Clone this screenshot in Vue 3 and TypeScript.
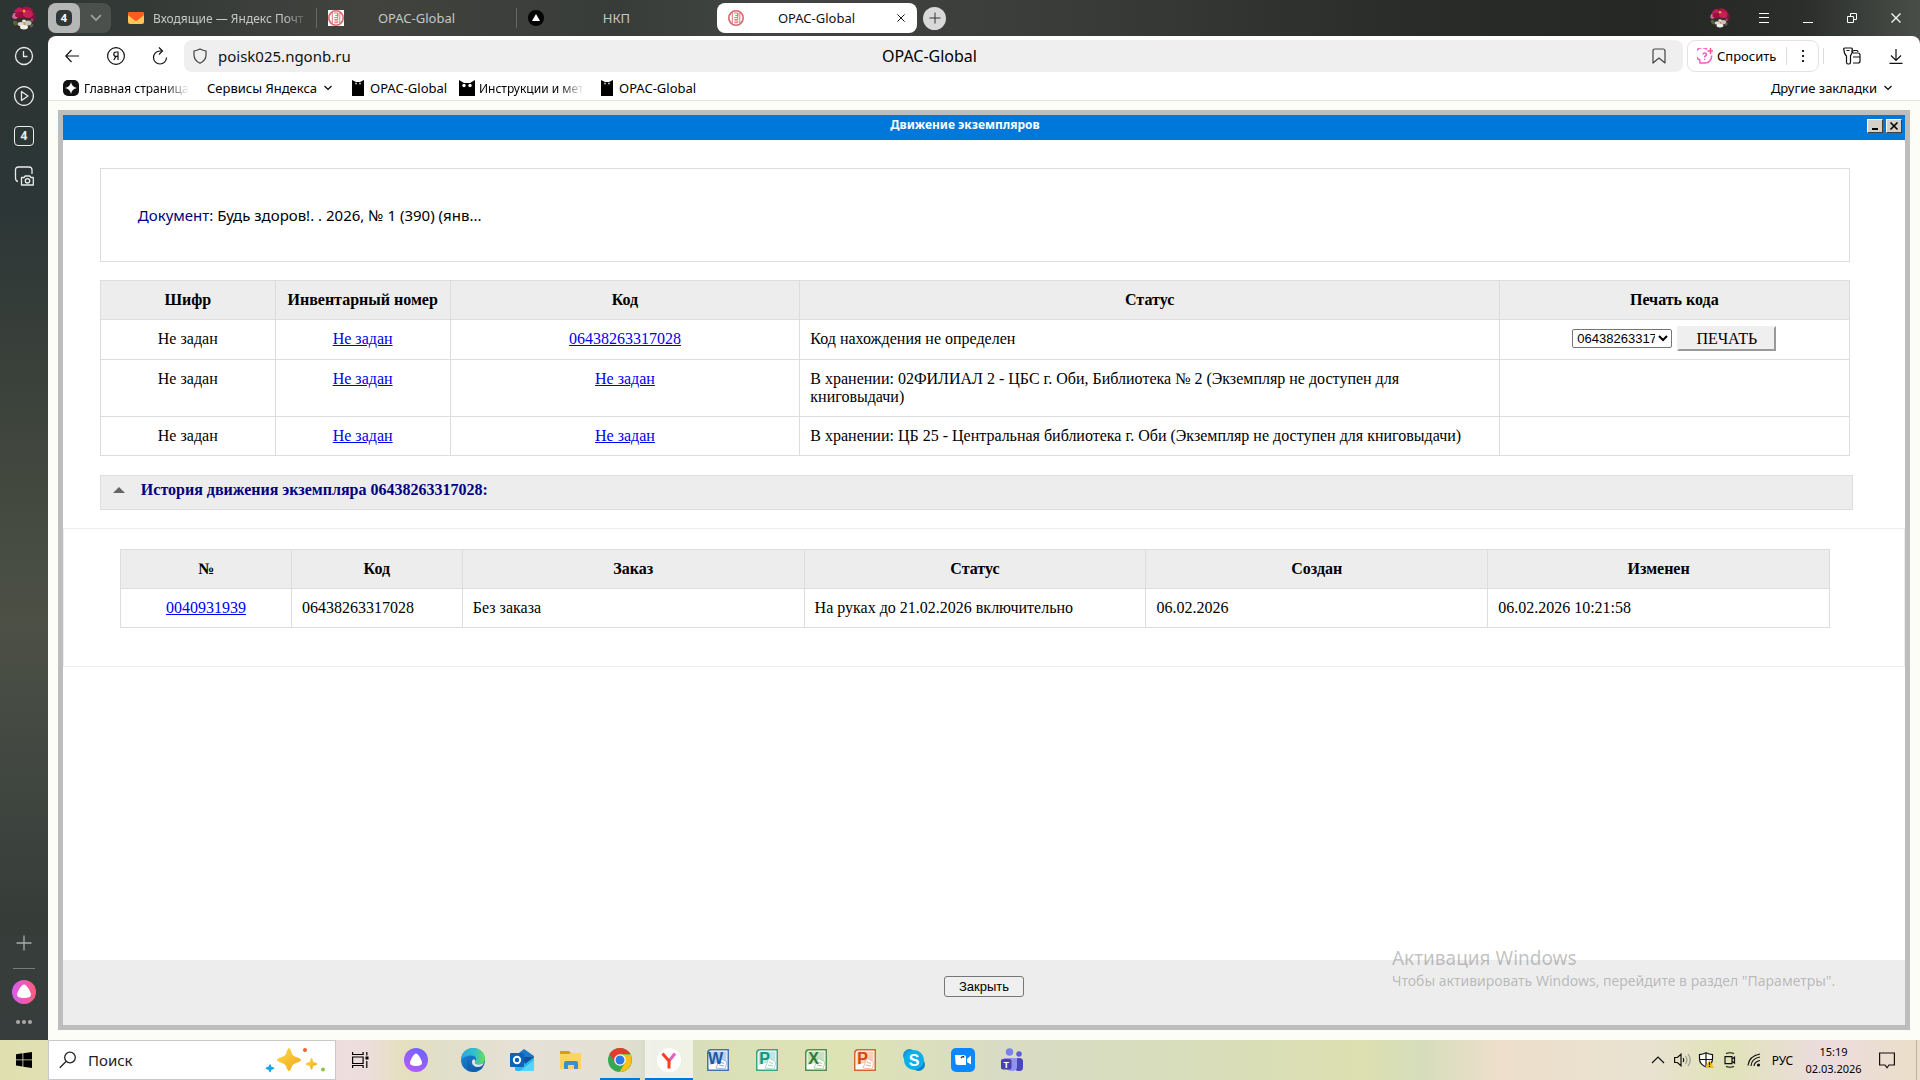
<script setup lang="ts">
import { ref } from 'vue'

interface Copy {
  cipher: string
  inventory: string
  code: string
  status: string
  printable: boolean
}

interface Movement {
  id: string
  code: string
  order: string
  status: string
  created: string
  changed: string
}

interface OfficeApp {
  name: string
  letter: string
  color: string
  dark: string
}

const copies: Copy[] = [
  { cipher: 'Не задан', inventory: 'Не задан', code: '06438263317028', status: 'Код нахождения не определен', printable: true },
  { cipher: 'Не задан', inventory: 'Не задан', code: 'Не задан', status: 'В хранении: 02ФИЛИАЛ 2 - ЦБС г. Оби, Библиотека № 2 (Экземпляр не доступен для книговыдачи)', printable: false },
  { cipher: 'Не задан', inventory: 'Не задан', code: 'Не задан', status: 'В хранении: ЦБ 25 - Центральная библиотека г. Оби (Экземпляр не доступен для книговыдачи)', printable: false },
]

const movements: Movement[] = [
  { id: '0040931939', code: '06438263317028', order: 'Без заказа', status: 'На руках до 21.02.2026 включительно', created: '06.02.2026', changed: '06.02.2026 10:21:58' },
]

const office: OfficeApp[] = [
  { name: 'Word', letter: 'W', color: '#7fa8dc', dark: '#1f57a8' },
  { name: 'Publisher', letter: 'P', color: '#8fd3c4', dark: '#12937d' },
  { name: 'Excel', letter: 'X', color: '#9bcb8b', dark: '#2f7a34' },
  { name: 'PowerPoint', letter: 'P', color: '#f5a880', dark: '#d2470f' },
]

const selectedCode = ref('06438263317028')
const address = ref('poisk025.ngonb.ru')
</script>

<template>
  <div class="screen">
    <svg class="defs" width="0" height="0" aria-hidden="true">
      <defs>
        <clipPath id="round"><circle cx="12" cy="12" r="12" /></clipPath>
        <linearGradient id="alice" x1="0" x2="1"><stop offset="0" stop-color="#d95bf0" /><stop offset="1" stop-color="#ff5b7c" /></linearGradient>
        <linearGradient id="violet" x1="0.8" y1="0" x2="0.2" y2="1"><stop offset="0" stop-color="#6a63ff" /><stop offset="1" stop-color="#b85cf8" /></linearGradient>
        <linearGradient id="gold" x1="0" y1="0" x2="1" y2="1"><stop offset="0" stop-color="#ffd94a" /><stop offset="1" stop-color="#f0a818" /></linearGradient>
        <linearGradient id="edgeTop" x1="0" x2="1"><stop offset="0" stop-color="#2aa6e0" /><stop offset="0.6" stop-color="#35c1c8" /><stop offset="1" stop-color="#6be04c" /></linearGradient>
        <linearGradient id="edgeLow" x1="0" y1="0" x2="1" y2="1"><stop offset="0" stop-color="#1b8ddb" /><stop offset="1" stop-color="#0d4f9e" /></linearGradient>
        <symbol id="flowers" viewBox="0 0 24 24">
          <g clip-path="url(#round)">
            <rect width="24" height="24" fill="#3a2c28" />
            <circle cx="3" cy="10" r="3" fill="#c86a9d" /><circle cx="21" cy="10" r="4" fill="#7a1440" />
            <ellipse cx="6" cy="4" rx="5" ry="3" fill="#c4195a" /><ellipse cx="16" cy="3" rx="6" ry="3" fill="#a91347" />
            <ellipse cx="8" cy="9" rx="5" ry="3" fill="#a00f40" /><ellipse cx="16" cy="8" rx="5" ry="4" fill="#c81f57" />
            <circle cx="12" cy="5" r="1.5" fill="#e8a92c" />
            <ellipse cx="9" cy="18" rx="3.500" ry="2" fill="#d8d8d8" /><ellipse cx="16" cy="17" rx="3.500" ry="2.500" fill="#c4c4c0" />
            <ellipse cx="12" cy="21" rx="4" ry="2.500" fill="#efefef" /><ellipse cx="12" cy="15" rx="2" ry="1.500" fill="#e4e4e4" />
            <circle cx="12.500" cy="18" r="1.200" fill="#c8a62a" />
            <circle cx="3" cy="17" r="2.500" fill="#4d6a35" /><circle cx="20" cy="14" r="1.500" fill="#a3446b" /><circle cx="20" cy="20" r="2" fill="#54683f" />
          </g>
        </symbol>
        <symbol id="library" viewBox="0 0 16 16">
          <rect width="16" height="16" fill="#fff" />
          <circle cx="8" cy="8" r="7.2" fill="none" stroke="#d9686b" stroke-width="1.6" />
          <path d="M4.300 3v10M11.800 3v10M6 3h3.800v2.500H7.300M9.800 3v4M6.300 7.500h3.500v2H6.300M6.300 12.700h3.500v-1.700H6.300" fill="none" stroke="#d9686b" stroke-width="0.9" />
        </symbol>
        <symbol id="owl" viewBox="0 0 12 16">
          <path d="M0 0l4 2h4l4-2v16H0z" fill="#000" /><circle cx="4" cy="3.500" r="0.900" fill="#ccc" /><circle cx="8" cy="3.500" r="0.900" fill="#ccc" />
        </symbol>
        <symbol id="owlWide" viewBox="0 0 16 16">
          <path d="M0 0l5 3h6l5-3v16H0z" fill="#000" /><circle cx="5" cy="5.500" r="1.700" fill="#fff" /><circle cx="11" cy="5.500" r="1.700" fill="#fff" />
        </symbol>
        <symbol id="chevron" viewBox="0 0 10 10"><path d="M1.5 3l3.5 3.5L8.500 3" fill="none" stroke="currentColor" stroke-width="1.2" /></symbol>
        <symbol id="cross" viewBox="0 0 10 10"><path d="M.5.5l9 9M9.500.5l-9 9" fill="none" stroke="currentColor" stroke-width="1.2" /></symbol>
      </defs>
    </svg>

    <div class="browser">
      <aside class="rail">
        <button class="rail-btn profile" aria-label="Профиль"><svg width="24" height="24"><use href="#flowers" /></svg></button>
        <button class="rail-btn" aria-label="История">
          <svg width="20" height="20" viewBox="0 0 20 20"><circle cx="10" cy="10" r="8.500" /><path d="M9.500 5v5.500H13.500" /></svg>
        </button>
        <button class="rail-btn" aria-label="Видео">
          <svg width="20" height="20" viewBox="0 0 20 20"><circle cx="10" cy="10" r="9.400" /><path d="M7.500 5.500v9l6.500-4.500z" stroke-linejoin="round" /></svg>
        </button>
        <button class="rail-btn" aria-label="Вкладки"><span class="count">4</span></button>
        <button class="rail-btn" aria-label="Скриншот">
          <svg width="20" height="20" viewBox="0 0 20 20"><path d="M4 15.500Q1.500 15 1.500 12V4Q1.500 1 4.500 1H15Q18 1 18 4V8" /><path d="M7.500 11.500h2.500l1.200-1.500h4.600l1.200 1.500h2.300v7.500H7.500z" stroke-linejoin="round" /><circle cx="13.500" cy="14.800" r="2.200" /></svg>
        </button>
        <div class="rail-gap"></div>
        <button class="rail-btn dim" aria-label="Добавить"><svg width="16" height="16" viewBox="0 0 16 16"><path d="M8 .5v15M.5 8h15" /></svg></button>
        <hr class="rail-line" />
        <button class="rail-btn alice" aria-label="Алиса">
          <svg width="24" height="24" viewBox="0 0 24 24"><circle cx="12" cy="12" r="12" fill="url(#alice)" stroke="none" /><path d="M12 4.500c2.500 0 7 7.500 7 10.300 0 2.200-3 3.200-7 3.200s-7-1-7-3.200C5 12 9.500 4.500 12 4.500z" fill="#fff" stroke="none" /></svg>
        </button>
        <button class="rail-btn more" aria-label="Ещё"><svg width="16" height="4" viewBox="0 0 16 4"><circle cx="2" cy="2" r="2" /><circle cx="8" cy="2" r="2" /><circle cx="14" cy="2" r="2" /></svg></button>
      </aside>

      <div class="main">
        <header class="tabs">
          <div class="group">
            <button class="group-count"><span>4</span></button>
            <button class="group-more" aria-label="Группы"><svg width="14" height="14"><use href="#chevron" /></svg></button>
          </div>
          <button class="tab first">
            <svg width="16" height="16" viewBox="0 0 16 16"><rect y="2" width="16" height="12" rx="2" fill="#ffc555" /><path d="M0 3.500Q0 2 1.500 2h13Q16 2 16 3.500V5l-6.500 5.300q-1.500 1-3 0L0 5z" fill="#ff5a1f" /></svg>
            <span class="fade">Входящие — Яндекс Почт</span>
          </button>
          <button class="tab">
            <svg width="16" height="16"><use href="#library" /></svg>
            <span>OPAC-Global</span>
          </button>
          <button class="tab">
            <svg width="16" height="16" viewBox="0 0 16 16"><circle cx="8" cy="8" r="8" fill="#000" /><path d="M8 4l4 7H4z" fill="#fff" /></svg>
            <span>НКП</span>
          </button>
          <div class="tab active">
            <svg width="16" height="16"><use href="#library" /></svg>
            <span>OPAC-Global</span>
            <button class="plain" aria-label="Закрыть вкладку"><svg width="8" height="8"><use href="#cross" /></svg></button>
          </div>
          <button class="new-tab" aria-label="Новая вкладка"><svg width="12" height="12" viewBox="0 0 12 12"><path d="M6 .5v11M.5 6h11" stroke="#333" /></svg></button>
          <div class="spacer"></div>
          <button class="sys" aria-label="Профиль"><svg width="20" height="20"><use href="#flowers" /></svg></button>
          <button class="sys" aria-label="Меню"><svg width="10" height="10" viewBox="0 0 10 10"><path d="M0 .5h10M0 4.500h10M0 9.500h10" stroke="#fff" /></svg></button>
          <button class="sys" aria-label="Свернуть"><svg width="10" height="10" viewBox="0 0 10 10"><path d="M0 9.500h10" stroke="#fff" /></svg></button>
          <button class="sys" aria-label="Восстановить"><svg width="10" height="10" viewBox="0 0 10 10"><path d="M.5 3.500h6v6h-6zM3.500 3.500v-3h6v6h-3" fill="none" stroke="#fff" /></svg></button>
          <button class="sys" aria-label="Закрыть"><svg width="10" height="10"><use href="#cross" /></svg></button>
        </header>

        <div class="chrome">
          <div class="toolbar">
            <button class="tool" aria-label="Назад"><svg width="14" height="14" viewBox="0 0 14 14"><path d="M14 7H1M6.500 1L.8 7l5.700 6" /></svg></button>
            <button class="tool" aria-label="Яндекс"><svg width="18" height="18" viewBox="0 0 18 18"><circle cx="9" cy="9" r="8.400" /><path d="M11 13V5H9.200Q6.800 5 6.800 7.200T9.200 9.400H11M9 9.400L6.800 13" /></svg></button>
            <button class="tool" aria-label="Обновить"><svg width="18" height="18" viewBox="0 0 18 18"><path d="M10.500 4H9a6.500 6.500 0 1 0 6.500 6.500M8 .5L11.500 4 8 7.500" /></svg></button>
            <div class="address">
              <svg width="14" height="16" viewBox="0 0 14 16"><path d="M7 1Q10 2.500 13 3V7q0 5.500-6 8.300Q1 12.500 1 7V3Q4 2.500 7 1z" fill="none" stroke="#444" stroke-width="1.200" /></svg>
              <input v-model="address" aria-label="Адрес" spellcheck="false" />
              <span class="page-title">OPAC-Global</span>
              <button aria-label="В закладки"><svg width="14" height="16" viewBox="0 0 14 16"><path d="M1 15V3Q1 1 3 1h8q2 0 2 2v12l-6-5z" fill="none" stroke="#444" stroke-width="1.200" stroke-linejoin="round" /></svg></button>
            </div>
            <div class="ask">
              <button class="ask-main">
                <svg width="16" height="16" viewBox="0 0 16 16" fill="none" stroke="#f05fc0" stroke-width="1.500"><path d="M10 1.500A6.500 6.500 0 1 0 2.800 12l.2 3h5A6.500 6.500 0 0 0 14.500 7.500" /><path d="M6 6.500Q6 5 7.700 5t1.800 1.500Q9.500 7.500 7.700 8.500v1M7.700 10.800v1.200" /><path d="M13.500 0v6M10.500 3h6" stroke="#ff5590" /></svg>
                <span>Спросить</span>
              </button>
              <button class="ask-more" aria-label="Ещё"><svg width="4" height="14" viewBox="0 0 4 14"><path d="M1 1h2v2H1zM1 6h2v2H1zM1 11h2v2H1z" fill="#222" stroke="none" /></svg></button>
            </div>
            <i class="tool-line"></i>
            <button class="tool" aria-label="Пароли"><svg width="18" height="18" viewBox="0 0 18 18"><path d="M1 3Q0 1 2 1h6q2 0 1 2v3Q8 8 7.500 8.500V15q0 2-1.500 2H5q-1.500 0-1.500-2V9Q1 7 1 3zM3.500 3.500h3M10 6h5q2 0 2 2v6q0 2-2 2H10M9.500 6V4.500q0-1 1.500-1h2.500q1.500 0 1.500 1.500M10 10h7" /></svg></button>
            <button class="tool" aria-label="Загрузки"><svg width="14" height="16" viewBox="0 0 14 16"><path d="M7 1v11M2 7.500l5 5 5-5M.5 15.300h13" /></svg></button>
          </div>
          <nav class="bookmarks">
            <a href="#" class="mark-home"><svg width="16" height="16" viewBox="0 0 16 16"><rect width="16" height="16" rx="5" fill="#111" /><path d="M8 2q.8 5.200 6 6-5.200.8-6 6-.8-5.200-6-6 5.200-.8 6-6z" fill="#fff" /></svg><span class="fade">Главная страница</span></a>
            <a href="#" class="mark-services">Сервисы Яндекса<svg width="10" height="10"><use href="#chevron" /></svg></a>
            <a href="#" class="mark-opac"><svg width="12" height="16"><use href="#owl" /></svg>OPAC-Global</a>
            <a href="#" class="mark-help"><svg width="16" height="16"><use href="#owlWide" /></svg><span class="fade">Инструкции и мет</span></a>
            <a href="#" class="mark-opac"><svg width="12" height="16"><use href="#owl" /></svg>OPAC-Global</a>
            <a href="#" class="mark-other">Другие закладки<svg width="10" height="10"><use href="#chevron" /></svg></a>
          </nav>
        </div>

        <main class="page">
          <section class="dialog">
            <div class="caption">
              <h1>Движение экземпляров</h1>
              <button class="cap-btn" aria-label="Свернуть"><svg width="10" height="10" viewBox="0 0 10 10"><path d="M2 8h6" stroke="#000" stroke-width="2" /></svg></button>
              <button class="cap-btn" aria-label="Закрыть"><svg width="10" height="10" viewBox="0 0 10 10"><path d="M1.500 1.500l7 7M8.500 1.500l-7 7" stroke="#000" stroke-width="1.600" /></svg></button>
            </div>
            <div class="content">
              <div class="document"><span>Документ:</span> Будь здоров!. . 2026, № 1 (390) (янв...</div>

              <table class="copies">
                <colgroup><col class="w10" /><col class="w10" /><col class="w20" /><col class="w40" /><col class="w20" /></colgroup>
                <thead>
                  <tr><th>Шифр</th><th>Инвентарный номер</th><th>Код</th><th>Статус</th><th>Печать кода</th></tr>
                </thead>
                <tbody>
                  <tr v-for="(c, i) in copies" :key="i">
                    <td class="mid">{{ c.cipher }}</td>
                    <td class="mid"><a href="#">{{ c.inventory }}</a></td>
                    <td class="mid"><a href="#">{{ c.code }}</a></td>
                    <td>{{ c.status }}</td>
                    <td class="print-cell">
                      <div v-if="c.printable" class="print">
                        <select v-model="selectedCode" aria-label="Код для печати"><option>06438263317028</option></select>
                        <button>ПЕЧАТЬ</button>
                      </div>
                    </td>
                  </tr>
                </tbody>
              </table>

              <h2 class="history-title"><svg width="12" height="6" viewBox="0 0 12 6"><path d="M0 6l6-6 6 6z" fill="#666" /></svg>История движения экземпляра 06438263317028:</h2>

              <div class="history">
                <table>
                  <colgroup><col class="w10" /><col class="w10" /><col class="w20" /><col class="w20" /><col class="w20" /><col class="w20" /></colgroup>
                  <thead>
                    <tr><th>№</th><th>Код</th><th>Заказ</th><th>Статус</th><th>Создан</th><th>Изменен</th></tr>
                  </thead>
                  <tbody>
                    <tr v-for="m in movements" :key="m.id">
                      <td class="mid"><a href="#">{{ m.id }}</a></td>
                      <td>{{ m.code }}</td>
                      <td>{{ m.order }}</td>
                      <td>{{ m.status }}</td>
                      <td>{{ m.created }}</td>
                      <td>{{ m.changed }}</td>
                    </tr>
                  </tbody>
                </table>
              </div>
            </div>
            <footer class="bottom"><button>Закрыть</button></footer>
          </section>
        </main>
      </div>
    </div>

    <div class="activation">
      <p class="big">Активация Windows</p>
      <p>Чтобы активировать Windows, перейдите в раздел "Параметры".</p>
    </div>

    <footer class="taskbar">
      <button class="start" aria-label="Пуск"><svg width="16" height="16" viewBox="0 0 16 16"><path d="M0 2.200l6.500-.9v6.200H0zM7.300 1.200L16 0v7.500H7.300zM0 8.300h6.500v6.200L0 13.600zM7.300 8.300H16V16l-8.700-1.200z" /></svg></button>
      <label class="search">
        <svg width="18" height="18" viewBox="0 0 18 18"><circle cx="11" cy="6.500" r="5.300" fill="none" stroke="#222" stroke-width="1.300" /><path d="M7 10.500L.8 16.800" stroke="#222" stroke-width="1.300" /></svg>
        <input placeholder="Поиск" aria-label="Поиск" />
        <svg width="62" height="26" viewBox="0 0 62 26"><path d="M24 1q1.500 0 3 6 1 2 4 3 5 1.500 5 3t-5 3q-3 1-4 3-1.500 5-3 5t-3-5q-1-2-4-3-5-1.500-5-3t5-3q3-1 4-3 1.500-6 3-6z" fill="url(#gold)" /><path d="M46.500 11q.8 0 1.800 4 4 1 4 2t-4 1.800q-1 4-1.800 4t-1.800-4q-4-.8-4-1.800t4-2q1-4 1.800-4z" fill="url(#gold)" /><path d="M5 18l.8 2.200 2.700 1-2.700 1-.8 2.300-1-2.300-2.500-1 2.500-1z" stroke="#14a5ea" stroke-width="1.500" stroke-linejoin="round" fill="#14a5ea" /><circle cx="40" cy="3" r="2" fill="#f0622b" /><circle cx="58" cy="22.500" r="2" fill="#8bc53f" /></svg>
      </label>
      <button class="app" aria-label="Представление задач"><svg width="17" height="16" viewBox="0 0 17 16" fill="none" stroke="#000" stroke-width="1.200"><path d="M.6 0v2.500h10.500V0M.6 5h10.500v6.500H.6zM.6 16v-2.500h10.500V16M14.800 0v3.500M14.800 9v7" /><path d="M13.500 4.500h3v3h-3z" fill="#000" stroke="none" /></svg></button>
      <button class="app voice" aria-label="Алиса"><svg width="24" height="24" viewBox="0 0 24 24"><circle cx="12" cy="12" r="12" fill="url(#violet)" /><path d="M12 5.500c2 0 6 6.500 6 9.300 0 2.200-2.500 3.200-6 3.200s-6-1-6-3.200c0-2.800 4-9.300 6-9.300z" fill="#fff" /></svg></button>
      <div class="apps">
        <button class="app" aria-label="Edge"><svg width="24" height="24" viewBox="0 0 24 24"><circle cx="12" cy="12" r="12" fill="url(#edgeLow)" /><path d="M0 11C1 4 6 0 12 0c7 0 12 5 12 10.500 0 4-3 6-6 6-3.500 0-5-1.500-3.500-3 1.500-2 .5-6-4-6C6 7.500 1 9 0 13z" fill="url(#edgeTop)" /><path d="M8.500 11c-2 4 1 10 8 10 2.500 0 4.500-1 5.500-2-2 3.500-6 5-10 5-3-1-6-4-5.500-8 .2-2 1-4 2-5z" fill="#1260b0" /><path d="M14.500 13.500c-1.500 1.500 0 3 3.500 3 2 0 4-.8 5-2-1 3.500-4 5-7 4.500-4-.5-6-4-4.500-7 1-1.500 3-1 3 1.500z" fill="#dfe5d8" /></svg></button>
        <button class="app" aria-label="Outlook"><svg width="24" height="24" viewBox="0 0 24 24"><path d="M5 8l9-7 10 7v4H5z" fill="#1a78c8" /><path d="M5 9h19v12q0 2-2 2H7q-2 0-2-2z" fill="#28b8ee" /><path d="M12 9h12l-9 7z" fill="#0f4f9c" /><path d="M24 12v9q0 2-2 2H10z" fill="#4fd8fb" /><rect y="5" width="14" height="14" rx="1" fill="#0b62b8" /><circle cx="7" cy="12" r="3.200" fill="none" stroke="#fff" stroke-width="1.900" /></svg></button>
        <button class="app" aria-label="Проводник"><svg width="24" height="24" viewBox="0 0 24 24"><path d="M1 3h9l2 2h10v5H1z" fill="#d99b12" /><path d="M1 6h9l2-1h10v16H1z" fill="#fcd463" /><path d="M5 21v-6q0-2 2-2h10q2 0 2 2v6h-4v-4H9v4z" fill="#3e8fd0" /></svg></button>
        <button class="app open" aria-label="Chrome"><svg width="24" height="24" viewBox="0 0 24 24"><circle cx="12" cy="12" r="12" fill="#34a853" /><path d="M1.600 6A12 12 0 0 1 22.400 6H12z" fill="#e33b2e" /><path d="M1.600 6L7 15l5-9z" fill="#e33b2e" /><path d="M22.400 6.500A12 12 0 0 1 11.500 24L17 15l-5-8.500z" fill="#fbc116" /><circle cx="12" cy="12" r="5.800" fill="#fff" /><circle cx="12" cy="12" r="4.500" fill="#2e78e8" /></svg></button>
        <button class="app open current" aria-label="Яндекс Браузер"><svg width="24" height="24" viewBox="0 0 24 24"><circle cx="12" cy="12" r="12" fill="#fff" /><path d="M12 13l6-7.500" stroke="#e95cc0" stroke-width="3" /><path d="M5.500 5.500L12 13v7.500" fill="none" stroke="#fc3f1d" stroke-width="3" /></svg></button>
        <button v-for="o in office" :key="o.name" class="app" :aria-label="o.name">
          <svg width="24" height="24" viewBox="0 0 24 24">
            <path d="M5 1h18v22H1V5Q1 1 5 1z" :fill="o.dark" opacity="0.8" /><path d="M5.500 2.500H21.500v19h-19V6Q2.500 2.500 5.500 2.500z" fill="#fff" />
            <path d="M6 3.500H20.500v9L3.500 17V6Q3.500 3.500 6 3.500z" :fill="o.color" opacity="0.55" />
            <path d="M14 10l7 4-2 7-9-1z" fill="#fff" :stroke="o.color" stroke-width="0.800" /><path d="M14 14l4 1.500M13 17l5 1" :stroke="o.color" />
            <text x="9.500" y="16" text-anchor="middle" font-family="Liberation Sans, sans-serif" font-weight="700" font-size="16" :fill="o.dark">{{ o.letter }}</text>
          </svg>
        </button>
        <button class="app" aria-label="Skype"><svg width="24" height="24" viewBox="0 0 24 24"><circle cx="7.500" cy="7.500" r="6.500" fill="#1596d8" /><circle cx="16.500" cy="16.500" r="6.500" fill="#0b80c8" /><circle cx="12" cy="12" r="10" fill="#0bb0e8" /><text x="12" y="17.500" text-anchor="middle" font-family="Liberation Sans, sans-serif" font-weight="700" font-size="16" fill="#fff">S</text></svg></button>
        <button class="app" aria-label="Zoom"><svg width="24" height="24" viewBox="0 0 24 24"><rect width="24" height="24" rx="5" fill="#0b87ff" /><path d="M4 7h8.500q2.500 0 2.500 2.500V17H7q-2.500 0-2.500-2.500zM16 11l4-3.500v9L16 14z" fill="#fff" /><path d="M10 10q2-2.500 3-.5" fill="none" stroke="#333" stroke-width="1.500" /></svg></button>
        <button class="app" aria-label="Teams"><svg width="24" height="24" viewBox="0 0 24 24"><circle cx="9.500" cy="4" r="3.700" fill="#7a80ec" /><circle cx="19" cy="6" r="2.800" fill="#5a5fd8" /><rect x="15" y="10" width="8" height="13" rx="3.500" fill="#4a45c0" /><path d="M4 10h13v9q0 4-5 4t-8-4z" fill="#8f93f4" /><rect x="1" y="11" width="10.500" height="10.500" rx="2" fill="#4b3fb4" /><text x="6.200" y="19.500" text-anchor="middle" font-family="Liberation Sans, sans-serif" font-weight="700" font-size="9" fill="#fff">T</text></svg></button>
      </div>
      <div class="spacer"></div>
      <div class="tray">
        <button aria-label="Скрытые значки"><svg width="14" height="8" viewBox="0 0 14 8"><path d="M1 7l6-6 6 6" /></svg></button>
        <button aria-label="Громкость"><svg width="17" height="14" viewBox="0 0 17 14"><path d="M.6 4.500h2.800L7 1.200v11.600L3.400 9.500H.6zM9 5q1.500 2 0 4" /><path d="M11.500 3q3 4 0 8M14 1q4.500 6 0 12" stroke="#999" /></svg></button>
        <button aria-label="Безопасность"><svg width="16" height="16" viewBox="0 0 16 16"><path d="M8 .8Q11 2.500 14.500 2.600V7q0 5-6.500 8Q1.500 12 1.500 7V2.600Q5 2.500 8 .8z" fill="#fff" /><path d="M8 1v14M1.500 7.500h13" /><path d="M11.500 7.500L16 16H7z" fill="#fbbc14" stroke="none" /><path d="M11.500 10.300v3M11.500 14v1" /></svg></button>
        <button aria-label="Камера"><svg width="14" height="16" viewBox="0 0 14 16"><path d="M2 4.600h7v7H2zM9 7l2.500-1.800v5.800L9 9.200M3 1.500q4-1.500 8 0M3 14.500q4 1.500 8 0" /></svg></button>
        <button aria-label="Сеть"><svg width="14" height="14" viewBox="0 0 14 14"><path d="M1 12.500Q2 3 13 1M4 13Q4.500 5.500 13 4M7 13Q7.500 8.500 13 7.500" /><circle cx="11.500" cy="12" r="1.600" fill="#111" stroke="none" /></svg></button>
        <button class="lang">РУС</button>
        <button class="clock"><span>15:19</span><span>02.03.2026</span></button>
        <button class="notes" aria-label="Уведомления"><svg width="16" height="17" viewBox="0 0 16 17"><path d="M.6 1h14.800v12H10l-2 2.800L6 13H.6z" /></svg></button>
      </div>
    </footer>
  </div>
</template>

<style>
body {
  background: #fcfdf6;
}
</style>

<style scoped>
* {
  box-sizing: border-box;
}

button {
  margin: 0;
  padding: 0;
  border: 0;
  background: none;
  font: inherit;
  color: inherit;
}

svg {
  display: block;
  flex: none;
}

.screen {
  position: relative;
  display: flex;
  flex-direction: column;
  min-height: 100vh;
  font-family: "Noto Sans", "Open Sans", sans-serif;
  font-size: 13px;
  color: #000;
}

.defs {
  position: absolute;
}

.spacer {
  flex: 1;
}

.browser {
  flex: 1;
  display: flex;
  background: linear-gradient(90deg, #2d3533 0, #353a37 8%, #42433f 19%, #383c39 32%, #424541 40%, #373a37 58%, #2a2d29 72%, #242723 86%, #2b2e2b 94%, #4a4e49 100%);
}

/* left rail */
.rail {
  flex: none;
  width: 48px;
  display: flex;
  flex-direction: column;
  align-items: center;
  background: linear-gradient(180deg, #2d3533 0, #2c3636 20%, #353d39 30%, #44493f 47%, #4c5045 60%, #434842 72%, #363d39 88%, #363d3c 100%);
}

.rail-btn {
  display: flex;
  align-items: center;
  justify-content: center;
  width: 48px;
  height: 40px;
  color: #e8eaea;
}

.rail-btn svg {
  fill: none;
  stroke: currentColor;
  stroke-width: 1.3;
}

.profile {
  height: 36px;
}

.profile svg {
  stroke: none;
}

.count {
  width: 20px;
  height: 20px;
  border: 1px solid #eceeee;
  border-radius: 4px;
  font-size: 12px;
  line-height: 18px;
  font-weight: 700;
}

.rail-gap {
  flex: 1;
}

.dim {
  color: #a9acab;
}

.rail-line {
  width: 22px;
  height: 1px;
  margin: 5px 0 3px;
  border: 0;
  background: #777b79;
}

.more {
  height: 20px;
  margin-bottom: 8px;
}

.more svg {
  fill: #a9acab;
  stroke: none;
}

.main {
  flex: 1;
  min-width: 0;
  display: flex;
  flex-direction: column;
}

/* tab strip */
.tabs {
  display: flex;
  align-items: center;
  height: 36px;
  padding-right: 2px;
}

.group {
  display: flex;
  width: 63px;
  height: 30px;
  margin-right: 6px;
  border-radius: 8px;
  background: #4b504d;
}

.group-count {
  display: grid;
  place-items: center;
  width: 32px;
  border-radius: 8px;
  background: #b5b7b6;
}

.group-count span {
  width: 16px;
  height: 16px;
  border-radius: 5px;
  background: #303735;
  color: #fff;
  font-size: 11px;
  line-height: 16px;
  font-weight: 700;
}

.group-more {
  display: grid;
  place-items: center;
  flex: 1;
  color: #a0a3a2;
}

.tab {
  display: grid;
  grid-template-columns: 16px 1fr 16px;
  align-items: center;
  width: 200px;
  height: 30px;
  padding: 0 12px 0 11px;
  color: #c6c7c6;
  text-align: center;
  background: linear-gradient(#656866, #656866) right center / 1px 20px no-repeat;
}

.tab:has(+ .active) {
  background-image: none;
}

.tab.first {
  grid-template-columns: 16px 1fr;
  gap: 9px;
  padding-right: 8px;
  text-align: left;
}

.fade {
  font-size: 12px;
  white-space: nowrap;
  mask-image: linear-gradient(90deg, #000 calc(100% - 24px), transparent);
}

.tab.active {
  border-radius: 8px;
  background: #fff;
  color: #111;
}

.plain {
  display: grid;
  place-items: center end;
}

.new-tab {
  display: grid;
  place-items: center;
  width: 23px;
  height: 23px;
  margin-left: 6px;
  border-radius: 50%;
  background: #d8d9d8;
}

.sys {
  display: grid;
  place-items: center;
  width: 44px;
  height: 36px;
  color: #fff;
}

/* address row and bookmarks */
.chrome {
  border-radius: 8px 8px 0 0;
  background: #fff;
  border-bottom: 1px solid #e2e3df;
}

.toolbar {
  display: flex;
  align-items: center;
  height: 40px;
  padding: 0 2px;
}

.tool {
  display: grid;
  place-items: center;
  width: 44px;
  height: 32px;
}

.tool svg {
  fill: none;
  stroke: #111;
  stroke-width: 1.2;
}

.address {
  flex: 1;
  display: flex;
  align-items: center;
  position: relative;
  height: 32px;
  margin-left: 2px;
  padding: 0 17px 0 9px;
  border-radius: 8px;
  background: #efefef;
  font-size: 16px;
}

.address input {
  flex: 1;
  min-width: 0;
  margin-left: 11px;
  padding: 0;
  border: 0;
  outline: 0;
  background: none;
  font: 15px "Noto Sans", sans-serif;
  color: #111;
}

.page-title {
  position: absolute;
  left: 0;
  right: 8px;
  text-align: center;
  pointer-events: none;
}

.ask {
  display: flex;
  align-items: center;
  width: 132px;
  height: 32px;
  margin-left: 4px;
  border: 1px solid #e3e3e3;
  border-radius: 8px;
}

.ask-main {
  display: flex;
  align-items: center;
  gap: 4px;
  width: 99px;
  height: 18px;
  padding-left: 9px;
  border-right: 1px solid #ddd;
}

.ask-more {
  display: grid;
  place-items: center;
  flex: 1;
}

.tool-line {
  width: 1px;
  height: 16px;
  margin: 0 6px 0 4px;
  background: #ddd;
}

.bookmarks {
  display: flex;
  align-items: center;
  height: 24px;
  padding: 0 27px 0 15px;
}

.bookmarks a {
  display: flex;
  align-items: center;
  color: #000;
  text-decoration: none;
  white-space: nowrap;
}

.bookmarks .mark-home {
  gap: 5px;
  width: 127px;
  margin-right: 17px;
}

.bookmarks .mark-services {
  gap: 6px;
  width: 124px;
  margin-right: 21px;
}

.bookmarks .mark-opac {
  gap: 6px;
  width: 94px;
  margin-right: 13px;
}

.bookmarks .mark-help {
  gap: 4px;
  width: 128px;
  margin-right: 14px;
}

.bookmarks .mark-other {
  gap: 6px;
  margin-left: auto;
}

/* application page */
.page {
  flex: 1;
  display: flex;
  padding: 9px 10px 10px;
  background: #fcfdf6;
}

.dialog {
  flex: 1;
  display: flex;
  flex-direction: column;
  min-width: 0;
  border: 5px solid #bdbdbd;
  background: #fff;
  font-family: "Liberation Serif", serif;
  font-size: 16px;
  line-height: 18px;
}

.caption {
  display: flex;
  align-items: flex-start;
  gap: 3px;
  height: 25px;
  padding: 4px 3px 0;
  background: #0078d9;
}

.caption h1 {
  flex: 1;
  margin: 0;
  color: #fff;
  font: 700 12px/12px "Noto Sans", sans-serif;
  text-align: center;
}

.cap-btn {
  display: grid;
  place-items: center;
  width: 16px;
  height: 14px;
  border: 1px solid;
  border-color: #fff #404040 #404040 #fff;
  background: #d4d0c8;
}

.content {
  flex: 1;
}

.document {
  width: 95%;
  margin: 28px 0 18px 2%;
  padding: 37px 37px 36px;
  border: 1px solid #ddd;
  font: 15px/19px "Noto Sans", sans-serif;
}

.document span {
  color: #000080;
}

table {
  table-layout: fixed;
  border-collapse: collapse;
}

.w10 {
  width: 10%;
}

.w20 {
  width: 20%;
}

.w40 {
  width: 40%;
}

th,
td {
  padding: 10px;
  border: 1px solid #ddd;
  text-align: left;
  vertical-align: top;
}

th {
  background: #ededed;
  text-align: center;
}

.mid {
  text-align: center;
}

td a {
  color: #0000ee;
}

.copies {
  width: 95%;
  margin-left: 2%;
}

.print-cell {
  padding: 6px 6px 8px;
}

.print {
  display: flex;
  align-items: center;
  justify-content: center;
  gap: 5px;
}

.print select {
  width: 100px;
  height: 19px;
  margin: 0;
  border: 1px solid #767676;
  border-radius: 2px;
  background-color: #fff;
  font: 13px "Liberation Sans", sans-serif;
}

.print button {
  width: 99px;
  height: 25px;
  border: 2px solid;
  border-color: #f0f0f0 #999 #999 #f0f0f0;
  background: #efefef;
}

.history-title {
  display: flex;
  align-items: center;
  gap: 16px;
  width: calc(95% + 3px);
  margin: 19px 0 18px 2%;
  padding: 5px 12px 10px;
  border: 1px solid #ddd;
  background: #ededed;
  color: #000080;
  font-size: 16px;
  line-height: 18px;
}

.history {
  padding: 20px 74px 38px 56px;
  border: 1px solid #eee;
}

.history table {
  width: 100%;
}

.bottom {
  display: flex;
  justify-content: center;
  height: 65px;
  padding-top: 16px;
  background: #ededed;
}

.bottom button {
  width: 80px;
  height: 21px;
  border: 1px solid #767676;
  border-radius: 3px;
  background: #efefef;
  font: 13px "Liberation Sans", sans-serif;
}

.activation {
  position: absolute;
  right: 74px;
  bottom: 89px;
  width: 454px;
  color: rgba(120, 120, 120, 0.45);
  font-size: 14px;
  line-height: 20px;
  white-space: nowrap;
  pointer-events: none;
}

.activation p {
  margin: 0;
}

.activation .big {
  font-size: 19px;
  line-height: 26px;
}

/* taskbar */
.taskbar {
  display: flex;
  height: 40px;
  background: linear-gradient(90deg, #dfe0ae 0, #eedddd 17%, #eddedd 19%, #e6dfbe 21%, #e0dfc8 23%, #e6e1d6 27%, #e4e0d4 32%, #d8dcc8 34%, #d9dfb8 37%, #dee3b4 44%, #d9dcc4 52%, #d8ddbe 60%, #dde0b0 71%, #d5ddbb 74%, #eddfcb 78%, #e9e2d0 86%, #e0e3b8 90%, #e8dfd0 93%, #ecdcdf 95%, #ebdfc8 100%);
}

.start {
  display: grid;
  place-items: center;
  width: 48px;
}

.search {
  display: flex;
  align-items: center;
  width: 288px;
  padding: 0 8px 0 10px;
  border: 1px solid #c8c8cc;
  background: #fff;
}

.search input {
  flex: 1;
  min-width: 0;
  padding: 0 0 0 11px;
  border: 0;
  outline: 0;
  font: 15px "Noto Sans", sans-serif;
}

.search input::placeholder {
  color: #222;
  opacity: 1;
}

.apps {
  display: flex;
  gap: 1px;
}

.app {
  display: grid;
  place-items: center;
  width: 48px;
  height: 40px;
}

.voice {
  margin: 0 9px 0 8px;
}

.open {
  background: linear-gradient(#0078d7, #0078d7) center bottom / 40px 2px no-repeat;
}

.current {
  background: linear-gradient(#0078d7, #0078d7) center bottom / 48px 2px no-repeat, rgba(255, 255, 255, 0.6);
}

.tray {
  display: flex;
  align-items: center;
  margin-right: 3px;
  border-right: 1px solid #b8b3a5;
}

.tray button {
  display: grid;
  place-items: center;
  width: 24px;
  height: 40px;
}

.tray svg {
  fill: none;
  stroke: #111;
  stroke-width: 1.2;
}

.tray .lang {
  width: 33px;
  font-size: 12px;
}

.tray .clock {
  align-content: center;
  width: 69px;
  font-size: 11px;
  line-height: 17px;
}

.tray .notes {
  width: 38px;
  margin-right: 10px;
}
</style>
